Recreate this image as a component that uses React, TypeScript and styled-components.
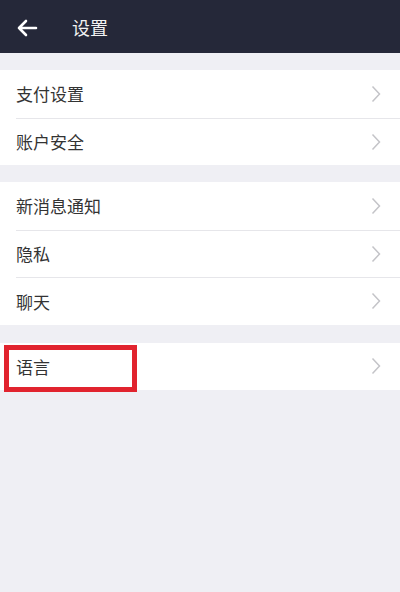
import React from "react";
import styled, { createGlobalStyle } from "styled-components";

const GlobalStyle = createGlobalStyle`
    html, body {
        margin: 0;
        padding: 0;
        background: #efeff4;
    }
    body {
        font-family: "Noto Sans CJK SC", "Noto Sans", sans-serif;
    }
`;

type Item = { label: string; highlight?: boolean };

const groups: { top: number; items: Item[] }[] = [
    { top: 17, items: [{ label: "支付设置" }, { label: "账户安全" }] },
    {
        top: 17,
        items: [{ label: "新消息通知" }, { label: "隐私" }, { label: "聊天" }],
    },
    { top: 18, items: [{ label: "语言", highlight: true }] },
];

const BackArrow = () => (
    <svg width="22" height="18" viewBox="0 0 22 18" fill="none">
        <path
            d="M20 9H3M10 2L3 9l7 7"
            stroke="#fff"
            strokeWidth="2.6"
            strokeLinecap="round"
            strokeLinejoin="round"
        />
    </svg>
);

const Chevron = () => (
    <svg width="10" height="18" viewBox="0 0 10 18" fill="none">
        <path d="M1.5 1.5L8.5 9l-7 7.5" stroke="#c4c4c8" strokeWidth="1.5" />
    </svg>
);

const App = () => {
    return (
        <>
            <GlobalStyle />
            <Page>
                <Header>
                    <BackButton>
                        <BackArrow />
                    </BackButton>
                    <Title>设置</Title>
                </Header>

                {groups.map((group, gi) => (
                    <Group key={gi} $top={group.top}>
                        {group.items.map((item) => (
                            <Row key={item.label}>
                                <Label>{item.label}</Label>
                                <Chevron />
                                {item.highlight && <Marker />}
                            </Row>
                        ))}
                    </Group>
                ))}
            </Page>
        </>
    );
};

export default App;

const Page = styled.div`
    width: 400px;
    min-height: 592px;
    background: #efeff4;
`;

const Header = styled.header`
    height: 53px;
    background: #252839;
    display: flex;
    align-items: center;
`;

const BackButton = styled.div`
    width: 54px;
    display: flex;
    align-items: center;
    padding-left: 16px;
    box-sizing: border-box;
    margin-top: 2px;
`;

const Title = styled.h1`
    margin: 0 0 0 18px;
    font-size: 18px;
    font-weight: 400;
    color: #f2f2f2;
`;

const Group = styled.section<{ $top: number }>`
    margin-top: ${(p) => p.$top}px;
    background: #fff;
`;

const Row = styled.div`
    position: relative;
    height: 47.5px;
    display: flex;
    align-items: center;
    justify-content: space-between;
    padding: 0 19px 0 16px;
    box-sizing: border-box;

    & + & {
        border-top: 1px solid #e6e6ea;
        margin-left: 16px;
        padding-left: 0;
    }
`;

const Label = styled.span`
    font-size: 17px;
    color: #333;
`;

const Marker = styled.div`
    position: absolute;
    left: 4px;
    top: 2px;
    width: 133px;
    height: 47px;
    border: 5px solid #e1232e;
    box-sizing: border-box;
    pointer-events: none;
`;
